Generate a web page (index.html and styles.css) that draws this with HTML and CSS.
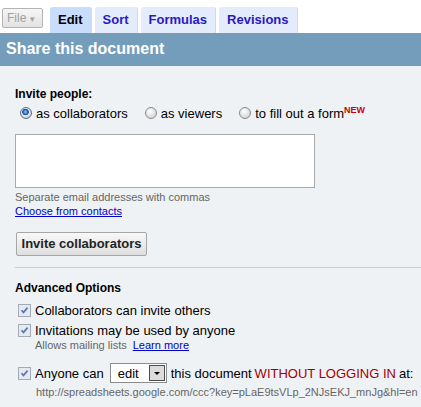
FILE: index.html
```html
<!DOCTYPE html>
<html>
<head>
<meta charset="utf-8">
<link rel="stylesheet" href="styles.css">
</head>
<body>
<div class="topbar">
  <div class="filebtn">File <span class="arr">&#9662;</span></div>
  <div class="tabs">
    <div class="tab active">Edit</div>
    <div class="tab">Sort</div>
    <div class="tab">Formulas</div>
    <div class="tab">Revisions</div>
  </div>
</div>
<div class="header">Share this document</div>
<div class="content">
  <div class="label">Invite people:</div>
  <div class="radios">
    <span class="radio checked"></span><span class="rtext">as collaborators</span>
    <span class="radio"></span><span class="rtext">as viewers</span>
    <span class="radio"></span><span class="rtext">to fill out a form<sup class="new">NEW</sup></span>
  </div>
  <div class="textarea"></div>
  <div class="hint">Separate email addresses with commas</div>
  <div class="hint"><a class="link" href="#">Choose from contacts</a></div>
  <div class="button">Invite collaborators</div>
  <div class="rule"></div>
  <div class="label adv">Advanced Options</div>
  <div class="cbrow first"><span class="cb"></span>Collaborators can invite others</div>
  <div class="cbrow"><span class="cb"></span>Invitations may be used by anyone</div>
  <div class="sub">Allows mailing lists <a class="link" href="#">Learn more</a></div>
  <div class="cbrow anyone"><span class="cb"></span>Anyone can <span class="select"><span class="seltext">edit</span><span class="selbtn"></span></span> this document <span class="warn">WITHOUT LOGGING IN</span> at:</div>
  <div class="sub url">http://spreadsheets.google.com/ccc?key=pLaE9tsVLp_2NJsEKJ_mnJg&amp;hl=en</div>
</div>
</body>
</html>
```
FILE: styles.css
```css
html, body {
  margin: 0;
  padding: 0;
  background: #ffffff;
  font-family: "Liberation Sans", Arial, sans-serif;
  color: #000;
}
.topbar {
  height: 33px;
  display: flex;
  align-items: flex-end;
  background: #fff;
}
.filebtn {
  align-self: flex-start;
  margin-top: 8px;
  margin-left: 2px;
  width: 39px;
  height: 18px;
  box-sizing: content-box;
  border: 1px solid #b4b4b4;
  border-radius: 2px;
  background: linear-gradient(#f6f6f6, #e2e2e2);
  color: #a0a0a0;
  font-size: 12px;
  line-height: 18px;
  text-indent: 4px;
  white-space: nowrap;
}
.filebtn .arr {
  font-size: 9px;
  color: #a0a0a0;
}
.tabs {
  display: flex;
  gap: 3px;
  margin-left: 7px;
}
.tab {
  height: 26px;
  box-sizing: border-box;
  padding: 0 8px;
  background: #e4ecfb;
  border-right: 1px solid #c9daf2;
  border-radius: 3px 3px 0 0;
  font-size: 13px;
  font-weight: bold;
  line-height: 26px;
  color: #2a18c4;
}
.tab.active {
  background: #c8dcfb;
  color: #000;
  border-right-color: #c8dcfb;
}
.header {
  height: 33px;
  background: #749dbc;
  color: #fff;
  font-size: 16px;
  font-weight: bold;
  line-height: 32px;
  padding-left: 6px;
}
.content {
  background: #eef2f5;
  padding: 21px 0 20px 15px;
}
.label {
  font-size: 12px;
  font-weight: bold;
  line-height: 14px;
}
.radios {
  margin-top: 3px;
  height: 18px;
  display: flex;
  align-items: center;
  font-size: 13px;
}
.radio {
  width: 12px;
  height: 12px;
  box-sizing: border-box;
  border-radius: 50%;
  border: 1px solid #8a8a8a;
  background: radial-gradient(circle at 40% 35%, #ffffff, #d8d8d8 70%);
  margin-left: 17px;
  margin-right: 4px;
  flex: none;
}
.radio:first-child {
  margin-left: 5px;
}
.radio.checked {
  border-color: #5c6f86;
  background: radial-gradient(circle at 45% 40%, #9fd0ff 0, #2a6fd0 2px, #1c4f96 3px, #e8ecf0 3.6px, #c8ccd2 6px);
}
.rtext {
  white-space: nowrap;
}
.new {
  color: #cc0000;
  font-size: 9px;
  font-weight: bold;
  vertical-align: 5px;
  line-height: 0;
}
.textarea {
  margin-top: 12px;
  width: 300px;
  height: 54px;
  box-sizing: border-box;
  border: 1px solid #a9a9a9;
  background: #fff;
}
.hint {
  font-size: 11px;
  line-height: 14px;
  color: #666;
}
.textarea + .hint {
  margin-top: 2px;
}
.link {
  color: #0000cc;
  text-decoration: underline;
}
.button {
  margin-top: 14px;
  margin-left: 1px;
  width: 131px;
  height: 24px;
  box-sizing: border-box;
  border: 1px solid #a6a6a6;
  border-radius: 2px;
  background: linear-gradient(#f8f8f8, #dedede);
  font-size: 13px;
  font-weight: bold;
  line-height: 22px;
  color: #222;
  text-align: center;
}
.rule {
  margin-top: 11px;
  border-top: 1px solid #cccccc;
}
.label.adv {
  margin-top: 13px;
}
.cbrow {
  display: flex;
  align-items: center;
  height: 18px;
  font-size: 13px;
  margin-top: 2px;
  white-space: nowrap;
}
.cbrow.first {
  margin-top: 6px;
}
.cb {
  width: 13px;
  height: 13px;
  box-sizing: border-box;
  margin-left: 3px;
  margin-right: 4px;
  border: 1px solid #a0aab8;
  background-color: #e6e9ee;
  background-image: url("data:image/svg+xml;utf8,<svg xmlns='http://www.w3.org/2000/svg' width='11' height='11'><path d='M2.5 5.2 L4.5 7.4 L8.6 2.6' fill='none' stroke='%235a78b8' stroke-width='1.7'/></svg>");
  flex: none;
}
.sub {
  margin-top: -1px;
  margin-left: 20px;
  font-size: 11px;
  line-height: 14px;
  color: #666;
}
.sub .link {
  margin-left: 3px;
}
.cbrow.anyone {
  margin-top: 11px;
  height: 20px;
}
.select {
  display: inline-flex;
  align-items: center;
  justify-content: space-between;
  width: 57px;
  height: 20px;
  box-sizing: border-box;
  border: 1px solid #8c8c8c;
  background: #fff;
  margin: 0 4px 0 6px;
  padding: 0 1px 0 7px;
}
.selbtn {
  width: 16px;
  height: 16px;
  box-sizing: border-box;
  border: 1px solid #4c4c4c;
  background-color: #dcdcdc;
  background-image: url("data:image/svg+xml;utf8,<svg xmlns='http://www.w3.org/2000/svg' width='14' height='14'><path d='M4 6 L10 6 L7 9 Z' fill='%23000'/></svg>");
}
.warn {
  color: #a00000;
  margin: 0 3px;
}
.sub.url {
  margin-top: 2px;
  margin-left: 21px;
}
```
